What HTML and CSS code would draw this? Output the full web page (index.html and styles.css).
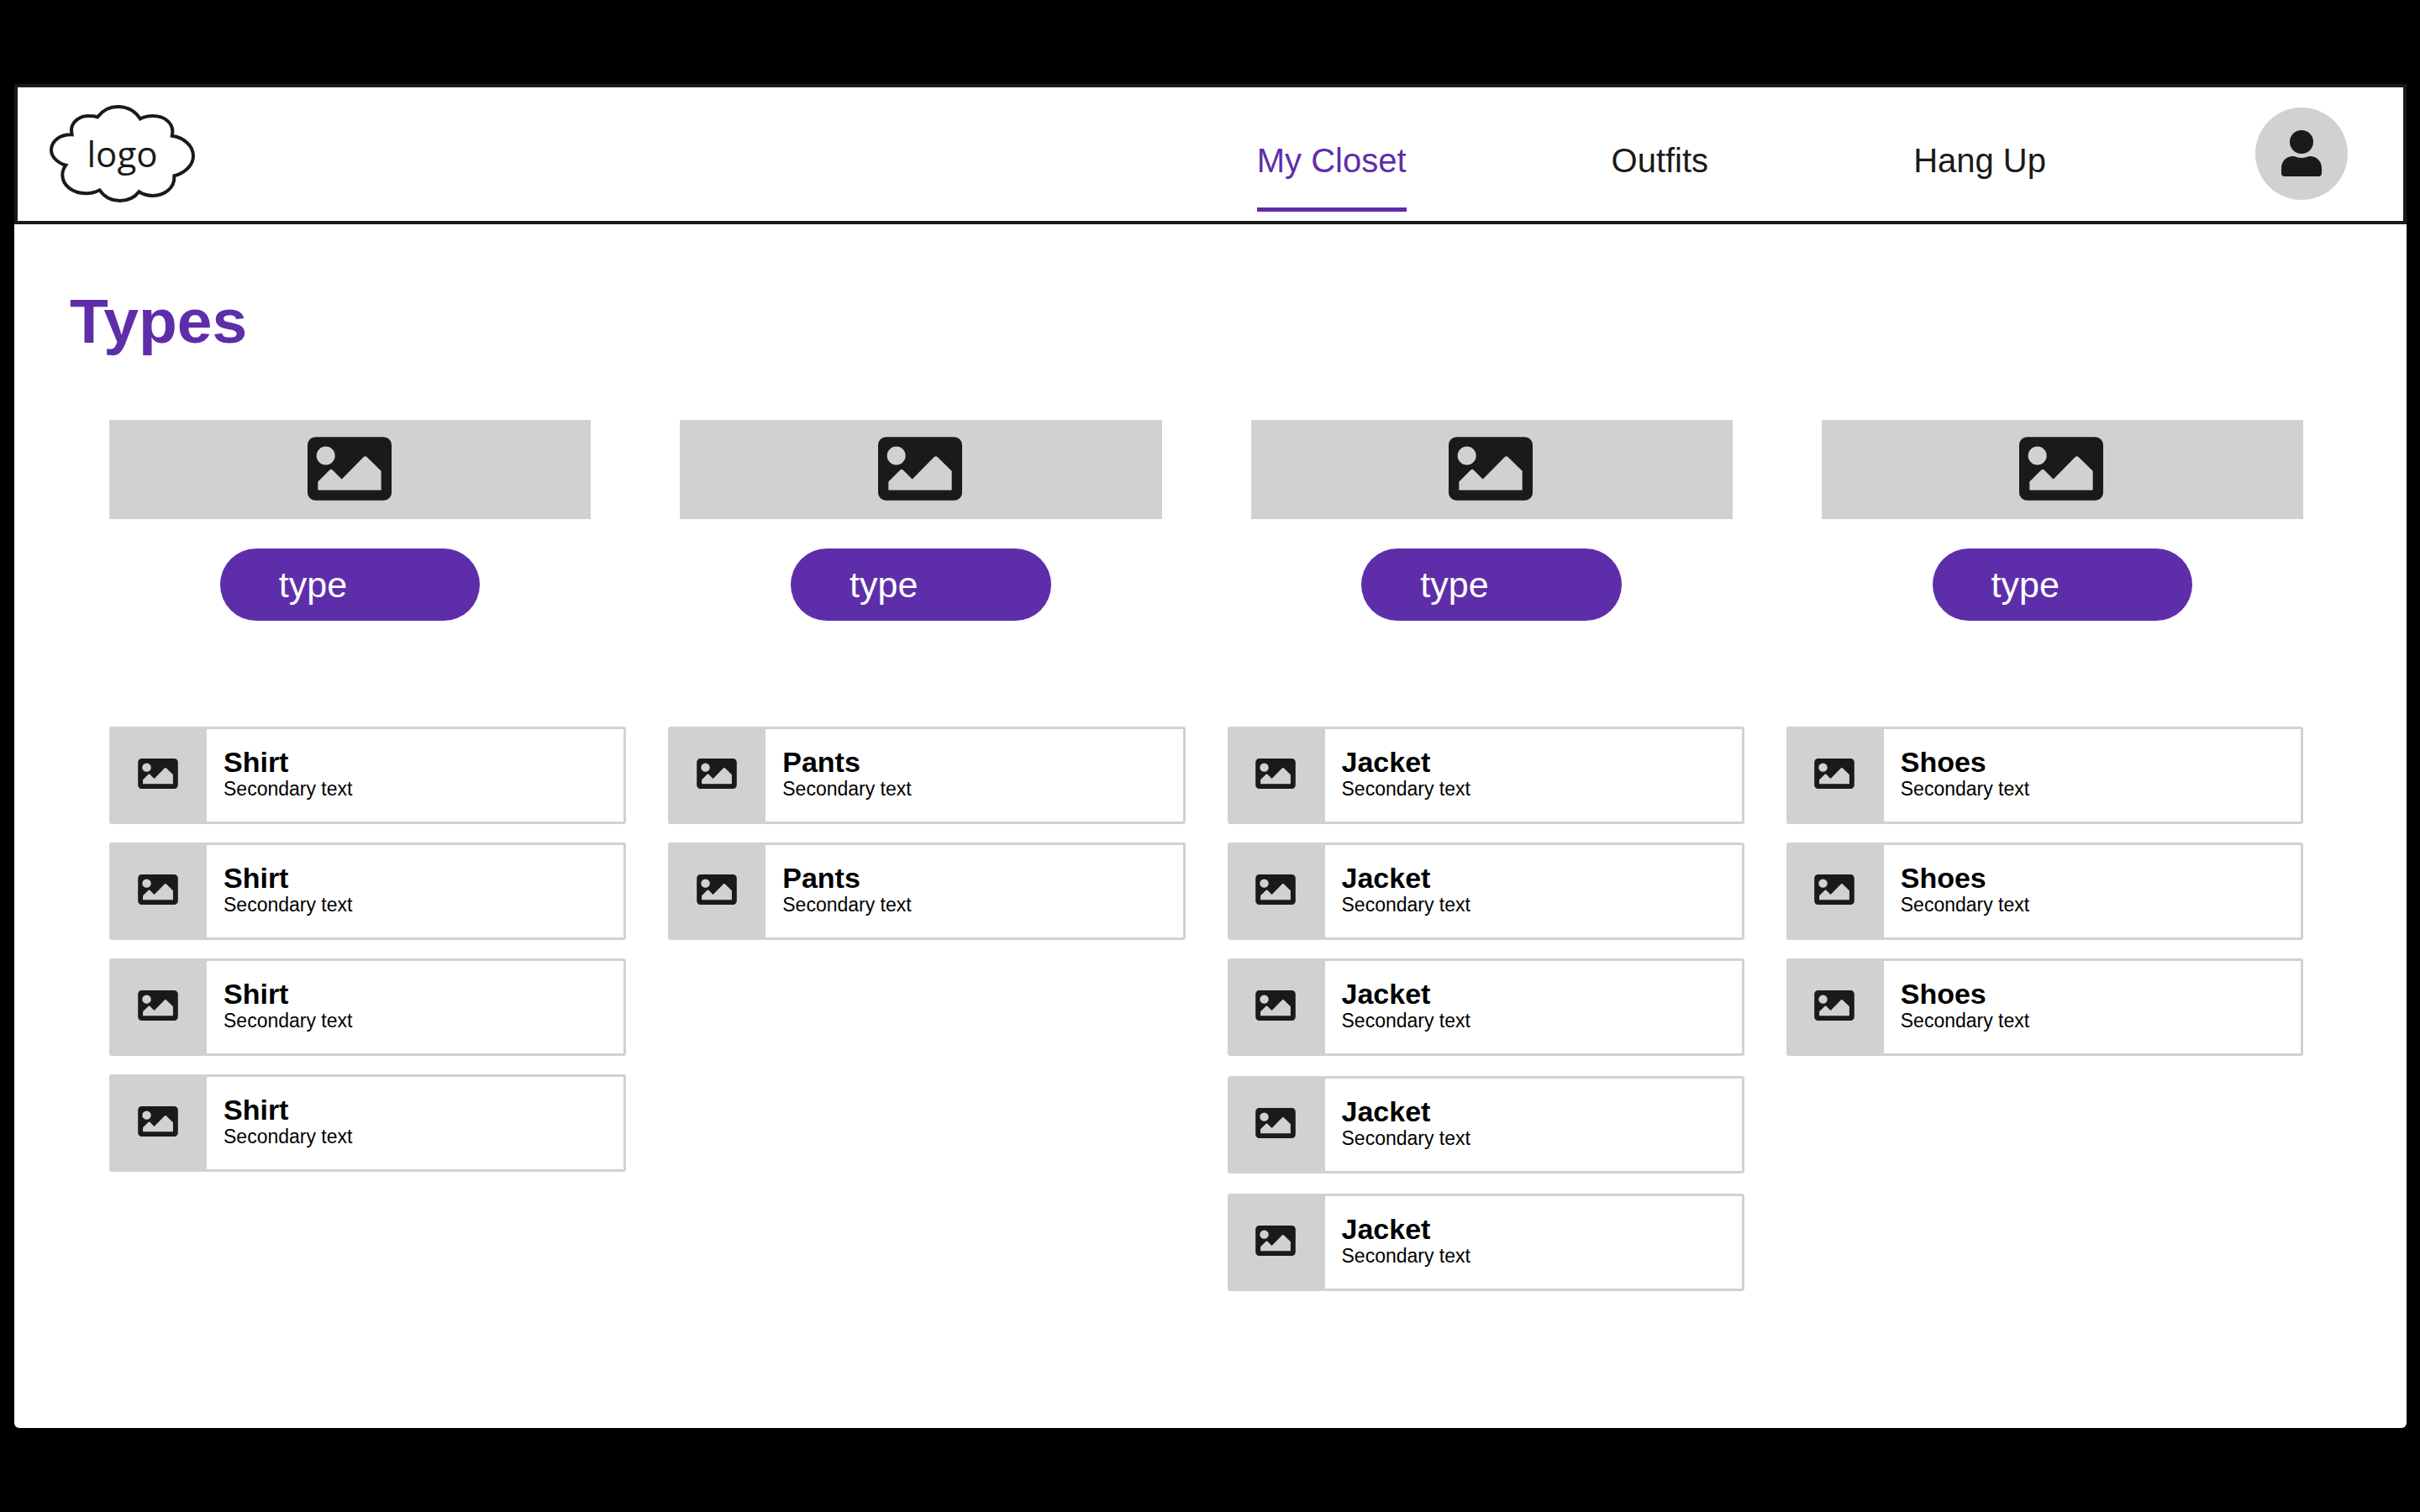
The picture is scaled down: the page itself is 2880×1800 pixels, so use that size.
FILE: index.html
```html
<!DOCTYPE html>
<html lang="en">
<head>
<meta charset="utf-8">
<title>My Closet</title>
<link rel="stylesheet" href="styles.css">
</head>
<body>
<svg class="sprite" aria-hidden="true">
  <symbol id="picture" viewBox="0 0 300 227">
    <path fill="#1a1a1a" fill-rule="evenodd" d="M28 0H272A28 28 0 0 1 300 28V199A28 28 0 0 1 272 227H28A28 28 0 0 1 0 199V28A28 28 0 0 1 28 0ZM65 34A33 33 0 1 0 65 100A33 33 0 1 0 65 34ZM37 160V190H263V122L211 71Q206 67 201 71L122 151L89 118Q84 114 79 118Z"/>
  </symbol>
</svg>

<div class="frame">
  <header class="topbar">
    <a class="logo" href="#">
      <svg class="logo-cloud" viewBox="176 135 520 348" aria-hidden="true">
        <path fill="none" stroke="#1a1a1a" stroke-width="12" stroke-miterlimit="3" d="M347 178C366 154 391 141 420 141C455 141 482 157 500 184C514 177 529 174 545 174C590 174 616 200 616 230L614 245C655 250 690 280 690 317C690 350 660 378 622 388C624 430 590 459 545 459C527 459 511 455 496 445C480 466 455 477 428 477C398 477 371 463 355 439C340 447 324 451 307 451C258 451 222 422 222 385C222 372 226 360 234 350C204 341 182 320 182 296C182 264 212 240 256 241L254 225C254 196 282 173 318 174C328 174 338 175 347 178Z"/>
      </svg>
      <span class="logo-text">logo</span>
    </a>
    <nav class="nav">
      <a class="nav-link nav-link-active" href="#">My Closet</a>
      <a class="nav-link" href="#">Outfits</a>
      <a class="nav-link" href="#">Hang Up</a>
    </nav>
    <button class="avatar" type="button" aria-label="Account">
      <svg class="avatar-icon" viewBox="0 0 48 55" aria-hidden="true">
        <circle cx="24" cy="14" r="14" fill="#1a1a1a"/>
        <path fill="#1a1a1a" d="M14 31Q16 31 18 32Q24 34 30 32Q32 31 34 31C42 31 48 37 48 45V51Q48 55 44 55H4Q0 55 0 51V45C0 37 6 31 14 31Z"/>
      </svg>
    </button>
  </header>

  <main class="content">
    <h1 class="title">Types</h1>

    <section class="types">
      <div class="type"><div class="banner"><svg class="banner-icon"><use href="#picture"/></svg></div><button class="pill" type="button">type</button></div>
      <div class="type"><div class="banner"><svg class="banner-icon"><use href="#picture"/></svg></div><button class="pill" type="button">type</button></div>
      <div class="type"><div class="banner"><svg class="banner-icon"><use href="#picture"/></svg></div><button class="pill" type="button">type</button></div>
      <div class="type"><div class="banner"><svg class="banner-icon"><use href="#picture"/></svg></div><button class="pill" type="button">type</button></div>
    </section>

    <section class="lists">
      <ul class="list">
        <li class="item"><div class="thumb"><svg class="thumb-icon"><use href="#picture"/></svg></div><div class="item-text"><h2 class="item-name">Shirt</h2><p class="item-note">Secondary text</p></div></li>
        <li class="item"><div class="thumb"><svg class="thumb-icon"><use href="#picture"/></svg></div><div class="item-text"><h2 class="item-name">Shirt</h2><p class="item-note">Secondary text</p></div></li>
        <li class="item"><div class="thumb"><svg class="thumb-icon"><use href="#picture"/></svg></div><div class="item-text"><h2 class="item-name">Shirt</h2><p class="item-note">Secondary text</p></div></li>
        <li class="item"><div class="thumb"><svg class="thumb-icon"><use href="#picture"/></svg></div><div class="item-text"><h2 class="item-name">Shirt</h2><p class="item-note">Secondary text</p></div></li>
      </ul>
      <ul class="list">
        <li class="item"><div class="thumb"><svg class="thumb-icon"><use href="#picture"/></svg></div><div class="item-text"><h2 class="item-name">Pants</h2><p class="item-note">Secondary text</p></div></li>
        <li class="item"><div class="thumb"><svg class="thumb-icon"><use href="#picture"/></svg></div><div class="item-text"><h2 class="item-name">Pants</h2><p class="item-note">Secondary text</p></div></li>
      </ul>
      <ul class="list">
        <li class="item"><div class="thumb"><svg class="thumb-icon"><use href="#picture"/></svg></div><div class="item-text"><h2 class="item-name">Jacket</h2><p class="item-note">Secondary text</p></div></li>
        <li class="item"><div class="thumb"><svg class="thumb-icon"><use href="#picture"/></svg></div><div class="item-text"><h2 class="item-name">Jacket</h2><p class="item-note">Secondary text</p></div></li>
        <li class="item"><div class="thumb"><svg class="thumb-icon"><use href="#picture"/></svg></div><div class="item-text"><h2 class="item-name">Jacket</h2><p class="item-note">Secondary text</p></div></li>
        <li class="item item-spaced"><div class="thumb"><svg class="thumb-icon"><use href="#picture"/></svg></div><div class="item-text"><h2 class="item-name">Jacket</h2><p class="item-note">Secondary text</p></div></li>
        <li class="item item-spaced"><div class="thumb"><svg class="thumb-icon"><use href="#picture"/></svg></div><div class="item-text"><h2 class="item-name">Jacket</h2><p class="item-note">Secondary text</p></div></li>
      </ul>
      <ul class="list">
        <li class="item"><div class="thumb"><svg class="thumb-icon"><use href="#picture"/></svg></div><div class="item-text"><h2 class="item-name">Shoes</h2><p class="item-note">Secondary text</p></div></li>
        <li class="item"><div class="thumb"><svg class="thumb-icon"><use href="#picture"/></svg></div><div class="item-text"><h2 class="item-name">Shoes</h2><p class="item-note">Secondary text</p></div></li>
        <li class="item"><div class="thumb"><svg class="thumb-icon"><use href="#picture"/></svg></div><div class="item-text"><h2 class="item-name">Shoes</h2><p class="item-note">Secondary text</p></div></li>
      </ul>
    </section>
  </main>
</div>
</body>
</html>
```
FILE: styles.css
```css
:root {
  --purple: #5e2eaa;
  --ink: #1a1a1a;
  --grey: #d1d1d1;
}

* {
  box-sizing: border-box;
}

body {
  margin: 0;
  padding: 100px 16px 100px 17px;
  background: #000;
  color: #000;
  font-family: "Liberation Sans", Arial, sans-serif;
}

h1, h2, p, ul {
  margin: 0;
  padding: 0;
}

button {
  border: 0;
  font-family: inherit;
  cursor: pointer;
}

.sprite {
  display: none;
}

.frame {
  min-height: calc(100vh - 200px);
  background: #fff;
  border-radius: 0 0 6px 6px;
}

/* Top bar */
.topbar {
  display: flex;
  align-items: center;
  height: 167px;
  padding: 0 66px 2px 38px;
  border: 4px solid var(--ink);
}

.logo {
  display: grid;
  place-items: center;
  color: var(--ink);
  text-decoration: none;
}

.logo-cloud,
.logo-text {
  grid-area: 1 / 1;
}

.logo-cloud {
  width: 173px;
  height: 116px;
}

.logo-text {
  font-family: "Open Sans", sans-serif;
  font-size: 42px;
}

.nav {
  display: flex;
  align-self: flex-end;
  gap: 244px;
  margin: 0 249px 9px auto;
}

.nav-link {
  padding-bottom: 33px;
  border-bottom: 5px solid transparent;
  color: var(--ink);
  font-size: 40px;
  line-height: 46px;
  text-decoration: none;
  white-space: nowrap;
}

.nav-link-active {
  border-color: var(--purple);
  color: var(--purple);
}

.avatar {
  display: grid;
  place-items: center;
  width: 110px;
  height: 110px;
  padding: 0;
  border-radius: 50%;
  background: var(--grey);
}

.avatar-icon {
  width: 48px;
  height: 55px;
}

/* Content */
.content {
  padding: 72px 123px 100px 113px;
}

.title {
  margin-left: -47px;
  color: var(--purple);
  font-size: 75px;
  line-height: 86px;
}

.types {
  display: grid;
  grid-template-columns: repeat(4, 1fr);
  gap: 106px;
  margin-top: 75px;
}

.type {
  display: flex;
  flex-direction: column;
  align-items: center;
  gap: 35px;
}

.banner {
  display: grid;
  place-items: center;
  width: 100%;
  height: 118px;
  padding: 0 2px 2px 0;
  background: var(--grey);
}

.banner-icon {
  width: 100px;
  height: 76px;
}

.pill {
  width: 54%;
  height: 86px;
  padding: 0 70px;
  border-radius: 43px;
  background: var(--purple);
  color: #fff;
  font-size: 43px;
  line-height: 50px;
  text-align: left;
}

/* Clothing lists */
.lists {
  display: grid;
  grid-template-columns: repeat(4, 1fr);
  align-items: start;
  gap: 50px;
  margin-top: 126px;
}

.list {
  display: grid;
  gap: 22px;
  list-style: none;
}

.item {
  display: flex;
  height: 116px;
  border: 3px solid var(--grey);
  border-radius: 3px;
}

.item-spaced {
  margin-top: 2px;
}

.thumb {
  display: grid;
  place-items: center;
  width: 113px;
  padding: 0 4px 4px 0;
  background: var(--grey);
}

.thumb-icon {
  width: 48px;
  height: 36px;
}

.item-text {
  padding: 20px 20px 0;
}

.item-name {
  font-size: 34px;
  line-height: 38px;
}

.item-note {
  font-size: 23px;
  line-height: 26px;
}
```
